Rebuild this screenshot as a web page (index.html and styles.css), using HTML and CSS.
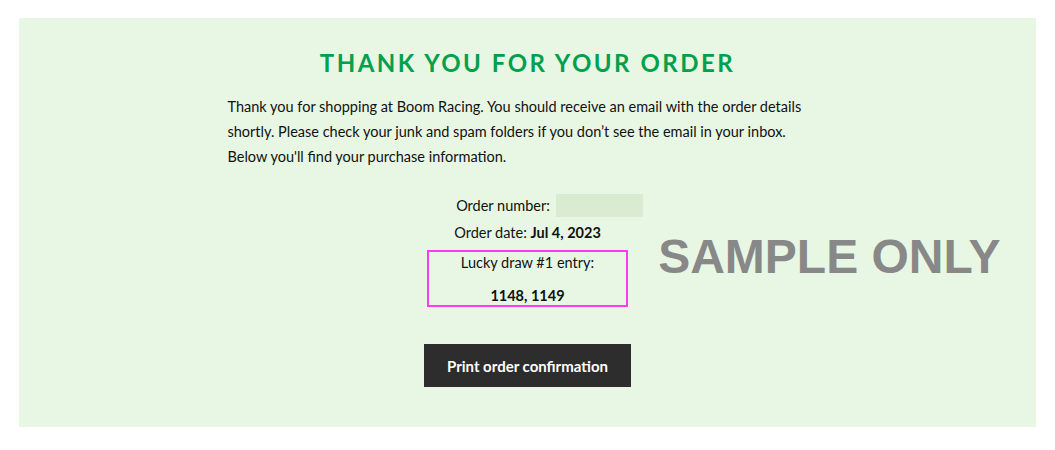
FILE: index.html
```html
<!DOCTYPE html>
<html>
<head>
<meta charset="utf-8">
<link rel="stylesheet" href="styles.css">
</head>
<body>
<div class="panel">
  <h1 class="title">THANK YOU FOR YOUR ORDER</h1>
  <p class="intro">Thank you for shopping at Boom Racing. You should receive an email with the order details shortly. Please check your junk and spam folders if you don’t see the email in your inbox. Below you'll find your purchase information.</p>
  <div class="details">
    <div class="row row-number"><span>Order number:</span><span class="redacted"></span></div>
    <div class="row">Order date: <b>Jul 4, 2023</b></div>
    <div class="lucky">
      <div class="lucky-label">Lucky draw #1 entry:</div>
      <div class="lucky-value">1148, 1149</div>
    </div>
    <div class="stamp">SAMPLE ONLY</div>
  </div>
  <div class="actions"><button class="print">Print order confirmation</button></div>
</div>
</body>
</html>
```
FILE: styles.css
```css
html, body { margin: 0; padding: 0; background: #fff; }
body { padding: 18px 19px 0; font-family: Lato, "Open Sans", sans-serif; color: #111; }
.panel {
  width: 1017px;
  height: 409px;
  box-sizing: border-box;
  background: #e8f7e4;
  padding-top: 33px;
  display: flex;
  flex-direction: column;
  align-items: center;
}
.title {
  margin: 0;
  font-size: 24px;
  line-height: 24px;
  font-weight: 700;
  letter-spacing: 2.5px;
  color: #00a04c;
}
.intro {
  width: 600px;
  margin: 19px 0 0;
  font-size: 14.5px;
  line-height: 25px;
  color: #111;
}
.details {
  position: relative;
  margin-top: 23px;
  display: flex;
  flex-direction: column;
  align-items: center;
  font-size: 14.5px;
}
.row { line-height: 27px; }
.row-number { display: flex; align-items: center; gap: 6px; margin-left: 44px; }
.redacted { display: inline-block; width: 87px; height: 23px; background: #d9ecd2; }
.lucky {
  width: 201px;
  height: 57px;
  box-sizing: border-box;
  border: 2px solid #f53ef0;
  margin-top: 4px;
  text-align: center;
}
.lucky-label { line-height: 22px; }
.lucky-value { font-weight: 700; line-height: 22px; margin-top: 11px; }
.stamp {
  position: absolute;
  left: 246px;
  top: 37px;
  font-family: "Liberation Sans", Arial, sans-serif;
  font-weight: 700;
  font-size: 48px;
  color: #888;
  white-space: nowrap;
  line-height: 56px;
}
.actions { margin-top: 37px; }
.print {
  width: 207px;
  height: 43px;
  border: 0;
  background: #2d2d2d;
  color: #fff;
  font-family: Lato, "Open Sans", sans-serif;
  font-weight: 700;
  font-size: 15px;
  cursor: pointer;
}
```
